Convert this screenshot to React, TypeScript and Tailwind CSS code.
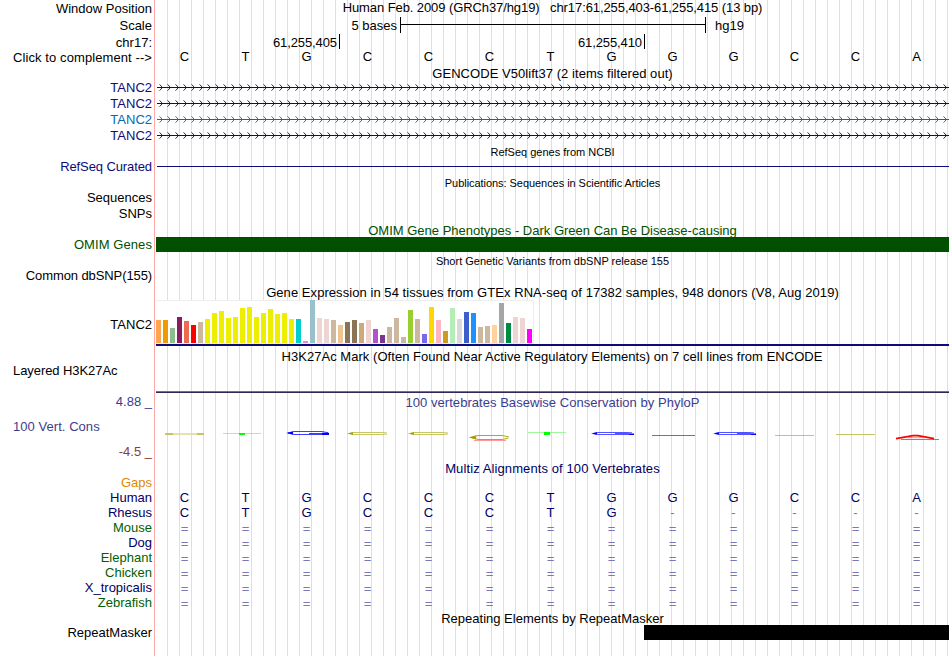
import React from 'react';

const BASES = ['C', 'T', 'G', 'C', 'C', 'C', 'T', 'G', 'G', 'G', 'C', 'C', 'A'];

const GTEX: [number, string][] = [
  [23, '#ffa54f'], [23, '#ee9a00'], [15, '#8fbc8f'], [26, '#8b1c62'], [22, '#ee6a50'], [18, '#ff0000'],
  [21, '#cdb79e'], [24, '#eeee00'], [30, '#eeee00'], [32, '#eeee00'], [25, '#eeee00'], [26, '#eeee00'],
  [35, '#eeee00'], [36, '#eeee00'], [26, '#eeee00'], [30, '#eeee00'], [34, '#eeee00'], [29, '#eeee00'],
  [30, '#eeee00'], [24, '#eeee00'], [24, '#00cdcd'], [2, '#ee82ee'], [43, '#9ac0cd'], [25, '#eed5d2'],
  [24, '#eed5d2'], [23, '#cdb79e'], [18, '#eec591'], [21, '#8b7355'], [23, '#8b7355'], [20, '#cdaa7d'],
  [23, '#eed5d2'], [14, '#b452cd'], [8, '#7a378b'], [16, '#cdb79e'], [25, '#cdb79e'], [6, '#cdb79e'],
  [33, '#9acd32'], [24, '#cdb79e'], [9, '#7a67ee'], [36, '#ffd700'], [23, '#ffb6c1'], [12, '#cd9b1d'],
  [35, '#b4eeb4'], [24, '#d9d9d9'], [31, '#3a5fcd'], [30, '#1e90ff'], [16, '#cdb79e'], [17, '#cdb79e'],
  [18, '#ffd39b'], [40, '#a6a6a6'], [20, '#008b45'], [26, '#eed5d2'], [25, '#eed5d2'], [14, '#ff00ff'],
];

const SPECIES = [
  { name: 'Human', color: 'text-[#000064]', bases: BASES },
  { name: 'Rhesus', color: 'text-[#000064]', bases: BASES.map((b, i) => (i < 8 ? b : '-')) },
  { name: 'Mouse', color: 'text-[#005f00]', bases: BASES.map(() => '=') },
  { name: 'Dog', color: 'text-[#000064]', bases: BASES.map(() => '=') },
  { name: 'Elephant', color: 'text-[#005f00]', bases: BASES.map(() => '=') },
  { name: 'Chicken', color: 'text-[#005f00]', bases: BASES.map(() => '=') },
  { name: 'X_tropicalis', color: 'text-[#000064]', bases: BASES.map(() => '=') },
  { name: 'Zebrafish', color: 'text-[#005f00]', bases: BASES.map(() => '=') },
];

type RowProps = {
  h: string;
  label?: string;
  labelClass?: string;
  children?: React.ReactNode;
};

const Row = ({ h, label, labelClass = '', children }: RowProps) => (
  <div className={`flex shrink-0 ${h}`}>
    <div className={`w-[156px] shrink-0 pr-1 flex items-center justify-end ${labelClass}`}>{label}</div>
    <div className="w-[793px] shrink-0">{children}</div>
  </div>
);

const Title = ({ className = '', children }: { className?: string; children: React.ReactNode }) => (
  <div className={`h-full flex items-center justify-center ${className}`}>{children}</div>
);

const Letters = ({ bases, className = '' }: { bases: string[]; className?: string }) => (
  <div className={`h-full -ml-0.5 grid grid-cols-13 w-[793px] items-center text-center ${className}`}>
    {bases.map((b, i) => (
      <span key={i} className={b === '=' ? 'text-[#7878b4] leading-[11px] pt-0.5' : b === '-' ? 'text-[#7878b4]' : ''}>{b}</span>
    ))}
  </div>
);

const Transcript = ({ color }: { color: string }) => (
  <svg width="793" height="16" className="block" fill="none" stroke={color}>
    <path d="M1 7.5H793" shapeRendering="crispEdges" />
    {Array.from({ length: 99 }, (_, i) => (
      <path key={i} d={`M${3.6 + i * 8} 4.4l2.9 3.1l-2.9 3.1`} strokeWidth="0.95" />
    ))}
  </svg>
);

// Sequence logo, squashed flat because the scores are close to zero
const Logo = () => (
  <svg width="793" height="54" className="block" fill="none">
    <path d="M10 21.5H47M10 22.5H47" stroke="#dcdc9a" strokeWidth="0.8" />
    <path d="M9 22H17M41 22H48" stroke="#b9b94a" strokeWidth="1.4" />

    <path d="M67 21.5H105" stroke="#a0f5a0" />
    <path d="M83 22H89" stroke="#00ff00" strokeWidth="2" />

    <path d="M172 20.7L166 19.5H138L132 21L138 22.5H171M153 21.5H171" stroke="#2828ff" strokeWidth="0.9" />
    <path d="M130 21.1l7-1.7v3zM166 20.8h7v2.2h-7z" fill="#0000ff" />

    {[191, 252].map((x) => (
      <g key={x}>
        <path d={`M${x + 40} 21L${x + 35} 20.5H${x + 6}L${x + 2} 21.5L${x + 6} 22.5H${x + 35}L${x + 40} 22`} stroke="#c0c058" strokeWidth="0.9" />
        <path d={`M${x} 21.5l6-1.2v2.4z`} fill="#a0a000" />
      </g>
    ))}

    <path d="M353 25L346 23.5H322L315 25.4L322 27.5H346L352 26.2" stroke="#acac20" strokeWidth="1.1" />
    <path d="M313 25.4l7-1.9v3.9z" fill="#a0a000" />
    <path d="M318 28.5H350" stroke="#ff8c8c" strokeWidth="0.9" />

    <path d="M372 20.5H410" stroke="#a0f5a0" />
    <path d="M388 21.5H394" stroke="#00ff00" strokeWidth="3" />

    {[435, 557].map((x) => (
      <g key={x}>
        <path d={`M${x + 41} 20.8L${x + 36} 20.5H${x + 7}L${x + 2} 21.5L${x + 7} 22.5H${x + 42}M${x + 24} 21.5H${x + 38}`} stroke="#4040ff" strokeWidth="0.9" />
        <path d={`M${x} 21.5l6-1.3v2.6zM${x + 38} 21.5h5v1.5h-5z`} fill="#0000ff" />
      </g>
    ))}

    <path d="M496 23.5H539" stroke="#6464ff" />
    <path d="M619 23.5H658" stroke="#c5c568" />
    <path d="M680 22.5H719" stroke="#c5c568" />

    <path d="M745 27.5H783" stroke="#6868ff" strokeWidth="0.9" />
    <path d="M740 26.7L757 23.7H762L778 26.7" stroke="#ff0000" strokeWidth="1.8" />
    <path d="M750 25.7H768" stroke="#ff6060" strokeWidth="0.7" />
  </svg>
);

export default function App() {
  return (
    <div className="relative w-[950px] h-[656px] overflow-hidden bg-white text-black text-[13px] leading-none whitespace-pre font-['Liberation_Sans',Arial,sans-serif]">
      {/* guide lines behind the tracks */}
      <div className="absolute inset-y-0 left-[154px] w-px bg-[#ffa8a8]" />
      <div className="absolute inset-y-0 left-[156px] right-px bg-[repeating-linear-gradient(to_right,transparent_0,transparent_11px,#dcdcf8_11px,#dcdcf8_12px)]" />

      <div className="relative flex flex-col">
        <Row h="h-4" label="Window Position">
          <Title className="tracking-[-0.09px] pb-0.5">Human Feb. 2009 (GRCh37/hg19)   chr17:61,255,403-61,255,415 (13 bp)</Title>
        </Row>
        <Row h="h-[17px]" label="Scale" labelClass="pt-0.5">
          <div className="h-full flex items-center">
            <span className="w-[241px] text-right pt-px">5 bases</span>
            <div className="ml-[3px] w-[306px] h-4 border-x border-black flex items-center">
              <div className="h-px w-full bg-black" />
            </div>
            <span className="ml-[9px] pt-px">hg19</span>
          </div>
        </Row>
        <Row h="h-[17px]" label="chr17:" labelClass="pt-0.5">
          <div className="h-full flex items-center tracking-[-0.1px]">
            <span className="w-[184px] pr-0.5 h-[15px] pt-px border-r border-black flex items-center justify-end">61,255,405</span>
            <span className="w-[305px] pr-0.5 h-[15px] pt-px border-r border-black flex items-center justify-end">61,255,410</span>
          </div>
        </Row>
        <Row h="h-[15px]" label="Click to complement -->" labelClass="tracking-[0.09px]">
          <Letters bases={BASES} className="pb-0.5" />
        </Row>

        <Row h="h-[15px]">
          <Title className="tracking-[0.05px] pt-0.5">GENCODE V50lift37 (2 items filtered out)</Title>
        </Row>
        <Row h="h-4" label="TANC2" labelClass="text-[#0c0c78] pb-0.5"><Transcript color="#0c0c78" /></Row>
        <Row h="h-4" label="TANC2" labelClass="text-[#0c0c78] pb-0.5"><Transcript color="#0c0c78" /></Row>
        <Row h="h-4" label="TANC2" labelClass="text-[#006cb4] pb-0.5"><Transcript color="#006cb4" /></Row>
        <Row h="h-4" label="TANC2" labelClass="text-[#0c0c78] pb-0.5"><Transcript color="#0c0c78" /></Row>

        <Row h="h-4"><Title className="text-[11px] pt-px">RefSeq genes from NCBI</Title></Row>
        <Row h="h-[15px]" label="RefSeq Curated" labelClass="text-[#0c0c78] tracking-[-0.1px] pb-0.5">
          <div className="mt-[6px] ml-px h-px bg-[#0c0c78]" />
        </Row>

        <Row h="h-4"><Title className="text-[11px] tracking-[-0.05px]">Publications: Sequences in Scientific Articles</Title></Row>
        <Row h="h-[15px]" label="Sequences" labelClass="pb-0.5" />
        <Row h="h-4" label="SNPs" labelClass="pb-0.5" />

        <Row h="h-[15px]"><Title className="text-[#005000] pt-0.5">OMIM Gene Phenotypes - Dark Green Can Be Disease-causing</Title></Row>
        <Row h="h-[15px]" label="OMIM Genes" labelClass="text-[#005000] tracking-[0.08px]">
          <div className="h-full bg-[#005000]" />
        </Row>

        <Row h="h-4"><Title className="text-[11px] pt-[3px]">Short Genetic Variants from dbSNP release 155</Title></Row>
        <Row h="h-4" label="Common dbSNP(155)" labelClass="tracking-[-0.1px] pb-0.5" />

        <Row h="h-4"><Title className="tracking-[0.06px]">Gene Expression in 54 tissues from GTEx RNA-seq of 17382 samples, 948 donors (V8, Aug 2019)</Title></Row>
        <Row h="h-[46px]" label="TANC2" labelClass="pt-0.5">
          <div className="w-[378px] h-[44px] bg-white border-y border-r border-[#eeeeee] flex items-end gap-0.5">
            {GTEX.map(([height, color], i) => (
              <div key={i} className="w-[5px] shrink-0" style={{ height, backgroundColor: color }} />
            ))}
          </div>
          <div className="h-0.5 bg-[#0c0c78]" />
        </Row>

        <Row h="h-[17px]">
          <Title className="tracking-[0.04px] pt-[3px] pr-px">H3K27Ac Mark (Often Found Near Active Regulatory Elements) on 7 cell lines from ENCODE</Title>
        </Row>
        <div className="h-[30px] flex">
          <div className="w-[156px] pl-[13px] pt-px tracking-[-0.07px]">Layered H3K27Ac</div>
          <div className="w-[793px] h-full flex items-end">
            <div className="h-0.5 w-full border-t border-[#7060e0] bg-[#302858]" />
          </div>
        </div>

        <div className="h-[67px] flex text-[#3c3c8c]">
          <div className="w-[156px] pr-1 pt-0.5 flex flex-col">
            <span className="text-right">4.88 _</span>
            <span className="pl-[13px] mt-3 tracking-[0.05px]">100 Vert. Cons</span>
            <span className="text-right mt-3 text-[#8c3c3c]">-4.5 _</span>
          </div>
          <div className="w-[793px]">
            <Title className="h-[19px]! tracking-[0.04px] pb-px">100 vertebrates Basewise Conservation by PhyloP</Title>
            <Logo />
          </div>
        </div>

        <Row h="h-[15px]"><Title className="text-[#000064] tracking-[0.1px] pt-px">Multiz Alignments of 100 Vertebrates</Title></Row>
        <Row h="h-[15px]" label="Gaps" labelClass="text-[#e18700]" />
        {SPECIES.map((s) => (
          <Row key={s.name} h="h-[15px]" label={s.name} labelClass={s.color}>
            <Letters bases={s.bases} className="text-[#000064]" />
          </Row>
        ))}

        <Row h="h-[15px]"><Title className="pt-0.5">Repeating Elements by RepeatMasker</Title></Row>
        <Row h="h-[15px]" label="RepeatMasker">
          <div className="h-full ml-[488px] bg-black" />
        </Row>
      </div>
    </div>
  );
}
